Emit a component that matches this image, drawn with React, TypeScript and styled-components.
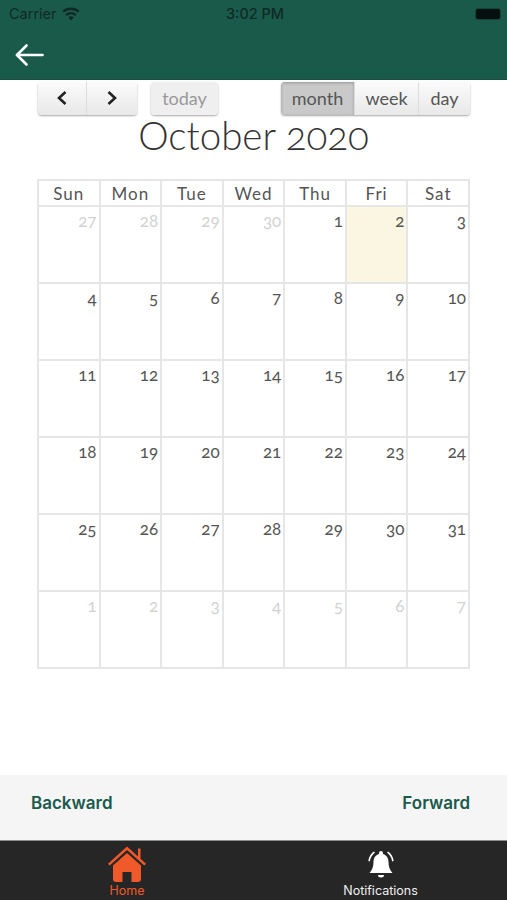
import styled, { createGlobalStyle } from "styled-components";

const GlobalStyle = createGlobalStyle`
  html, body {
    margin: 0;
    padding: 0;
    background: #fff;
  }
  * { box-sizing: border-box; }
`;

const Page = styled.div`
  width: 507px;
  height: 900px;
  display: flex;
  flex-direction: column;
  overflow: hidden;
  font-family: "Lato", "Open Sans", sans-serif;
  color: #333;
`;

const Header = styled.header`
  height: 80px;
  flex: none;
  background: #1a5a4b;
  border-bottom: 1px solid #17503f;
`;

const StatusBar = styled.div`
  height: 27px;
  display: grid;
  grid-template-columns: 1fr auto 1fr;
  align-items: center;
  padding: 0 6px 0 9px;
  color: #0f2a24;
  font-family: "Inter", "Liberation Sans", sans-serif;
  font-size: 14.5px;
`;

const Carrier = styled.div`
  display: flex;
  align-items: center;
  gap: 5px;
`;

const Clock = styled.div`
  font-weight: 500;
`;

const Battery = styled.div`
  justify-self: end;
  width: 26px;
  height: 12px;
  border-radius: 3px;
  background: #06100e;
  border: 1px solid #15463b;
`;

const BackRow = styled.div`
  padding: 16px 0 0 14px;
  line-height: 0;
`;

const Main = styled.main`
  flex: 1;
  padding: 1px 37px 0 37px;
`;

const Toolbar = styled.div`
  display: flex;
  align-items: center;
  height: 34px;
  padding-left: 1px;
`;

const ButtonGroup = styled.div`
  display: flex;
  border-radius: 4px;
  box-shadow: 0 1px 2px rgba(0, 0, 0, 0.35);
  overflow: hidden;
`;

const ToolButton = styled.button<{ $width: number; $active?: boolean; $muted?: boolean }>`
  width: ${(p) => p.$width}px;
  height: 33px;
  padding: 0;
  border: 0;
  border-right: 1px solid #dcdcdc;
  display: flex;
  align-items: center;
  justify-content: center;
  font-family: inherit;
  font-size: 18px;
  font-weight: 400;
  color: ${(p) => (p.$muted ? "#999" : "#555")};
  background: ${(p) =>
    p.$active
      ? "#c9c9c9"
      : p.$muted
        ? "#efefef"
        : "linear-gradient(#fbfbfb, #e8e8e8)"};
  box-shadow: ${(p) => (p.$active ? "inset 0 1px 3px rgba(0,0,0,0.25)" : "none")};
  &:last-child { border-right: 0; }
`;

const TodayGroup = styled(ButtonGroup)`
  margin-left: 14px;
`;

const ViewGroup = styled(ButtonGroup)`
  margin-left: auto;
`;

const Title = styled.h1`
  margin: 0;
  height: 64px;
  text-align: center;
  font-size: 38.5px;
  line-height: 40px;
  font-weight: 300;
  color: #333;
  font-variant-numeric: oldstyle-nums;
`;

const Calendar = styled.div`
  display: grid;
  grid-template-columns: repeat(7, 1fr);
  grid-template-rows: 26px repeat(6, 77px);
  width: 433px;
  border-top: 2px solid #e6e6e6;
  border-left: 2px solid #e6e6e6;
`;

const WeekDay = styled.div`
  display: flex;
  align-items: center;
  justify-content: center;
  border-right: 2px solid #e6e6e6;
  border-bottom: 2px solid #e6e6e6;
  font-size: 17px;
  letter-spacing: 1px;
  color: #555;
`;

const DayCell = styled.div<{ $outside?: boolean; $today?: boolean }>`
  padding: 4px 2px 0 0;
  text-align: right;
  border-right: 2px solid #e6e6e6;
  border-bottom: 2px solid #e6e6e6;
  font-size: 17px;
  font-weight: 400;
  line-height: 20px;
  font-variant-numeric: oldstyle-nums;
  color: ${(p) => (p.$outside ? "#d2d2d2" : "#555")};
  background: ${(p) => (p.$today ? "#faf6e2" : "#fff")};
`;

const Pager = styled.div`
  flex: none;
  height: 65px;
  padding: 0 37px 10px 31px;
  display: flex;
  align-items: center;
  justify-content: space-between;
  background: #f5f5f5;
`;

const PagerLink = styled.span`
  font-family: "Inter", "Liberation Sans", sans-serif;
  font-size: 17px;
  font-weight: 600;
  color: #1a5a4b;
`;

const TabBar = styled.nav`
  flex: none;
  height: 60px;
  display: grid;
  grid-template-columns: 254px 253px;
  background: #262626;
  border-top: 1px solid #8c8c8c;
`;

const Tab = styled.div<{ $active?: boolean }>`
  display: flex;
  flex-direction: column;
  align-items: center;
  justify-content: flex-end;
  padding-bottom: 2px;
  font-family: "Inter", "Liberation Sans", sans-serif;
  font-size: 12.5px;
  font-weight: 400;
  line-height: 14px;
  color: ${(p) => (p.$active ? "#f05a2a" : "#f0f0f0")};
`;

const BellWrap = styled.div`
  margin-bottom: 4px;
  line-height: 0;
`;

const WifiIcon = () => (
  <svg width="18" height="14" viewBox="0 0 18 14" fill="#0f2a24">
    <path d="M9 13.500 6.300 10.400a4 4 0 0 1 5.400 0Z" />
    <path d="M4.900 8.900 3.400 7.200a8.400 8.400 0 0 1 11.200 0L13.100 8.900a6.200 6.200 0 0 0-8.200 0Z" />
    <path d="M2 5.600.4 3.900a12.800 12.800 0 0 1 17.200 0L16 5.600a10.500 10.500 0 0 0-14 0Z" />
  </svg>
);

const BackArrow = () => (
  <svg width="30" height="24" viewBox="0 0 30 24" fill="none" stroke="#fff" strokeWidth="2.6" strokeLinecap="round" strokeLinejoin="round">
    <path d="M28.500 12H3" />
    <path d="M12.500 2.500 3 12l9.500 9.500" />
  </svg>
);

const Chevron = ({ right }: { right?: boolean }) => (
  <svg width="12" height="16" viewBox="0 0 12 16" fill="none" stroke="#222" strokeWidth="2.6">
    <path d={right ? "M2.500 2 9 8l-6.500 6" : "M9.500 2 3 8l6.500 6"} />
  </svg>
);

const HomeIcon = () => (
  <svg width="38" height="38" viewBox="0 0 38 38" fill="#f05a2a">
    <path d="M19 0.500 30 10.500V2.500h2.500v10.300l5.500 5-1.700 1.800L19 4 1.700 19.600 0 17.800Z" />
    <path d="M19 7 5 19.500V33a3 3 0 0 0 3 3h6.500V26h9v10H30a3 3 0 0 0 3-3V19.500Z" />
  </svg>
);

const BellIcon = () => (
  <svg width="26" height="30" viewBox="0 0 26 30" fill="#fff">
    <path d="M13 1a2 2 0 0 1 2 2v1c3.600 1 5.500 4.200 5.500 8 0 5 1.500 8 4 11H1.500c2.500-3 4-6 4-11 0-3.800 1.900-7 5.500-8V3a2 2 0 0 1 2-2Z" />
    <path d="M10 25h6a3 2.500 0 0 1-6 0Z" />
    <path d="M5.800 1.500 7 2.600C4.500 4.500 2.500 7.500 1.800 11.500L.3 11C.8 7 3 3.500 5.800 1.500Z" />
    <path d="M20.200 1.500 19 2.600c2.500 1.900 4.500 4.900 5.200 8.900l1.500-.5C25.200 7 23 3.500 20.200 1.500Z" />
  </svg>
);

const weekDays = ["Sun", "Mon", "Tue", "Wed", "Thu", "Fri", "Sat"];

const leading = [27, 28, 29, 30];
const trailing = [1, 2, 3, 4, 5, 6, 7];

type Day = { label: number; outside?: boolean; today?: boolean };

const days: Day[] = [
  ...leading.map((label) => ({ label, outside: true })),
  ...Array.from({ length: 31 }, (_, i) => ({ label: i + 1, today: i + 1 === 2 })),
  ...trailing.map((label) => ({ label, outside: true })),
];

export default function App() {
  return (
    <Page>
      <GlobalStyle />
      <Header>
        <StatusBar>
          <Carrier>
            Carrier <WifiIcon />
          </Carrier>
          <Clock>3:02 PM</Clock>
          <Battery />
        </StatusBar>
        <BackRow>
          <BackArrow />
        </BackRow>
      </Header>

      <Main>
        <Toolbar>
          <ButtonGroup>
            <ToolButton $width={49}>
              <Chevron />
            </ToolButton>
            <ToolButton $width={50}>
              <Chevron right />
            </ToolButton>
          </ButtonGroup>
          <TodayGroup>
            <ToolButton $width={67} $muted>
              today
            </ToolButton>
          </TodayGroup>
          <ViewGroup>
            <ToolButton $width={74} $active>
              month
            </ToolButton>
            <ToolButton $width={64}>week</ToolButton>
            <ToolButton $width={51}>day</ToolButton>
          </ViewGroup>
        </Toolbar>

        <Title>October 2020</Title>

        <Calendar>
          {weekDays.map((d) => (
            <WeekDay key={d}>{d}</WeekDay>
          ))}
          {days.map((d, i) => (
            <DayCell key={i} $outside={d.outside} $today={d.today}>
              {d.label}
            </DayCell>
          ))}
        </Calendar>
      </Main>

      <Pager>
        <PagerLink>Backward</PagerLink>
        <PagerLink>Forward</PagerLink>
      </Pager>

      <TabBar>
        <Tab $active>
          <HomeIcon />
          Home
        </Tab>
        <Tab>
          <BellWrap>
            <BellIcon />
          </BellWrap>
          Notifications
        </Tab>
      </TabBar>
    </Page>
  );
}
